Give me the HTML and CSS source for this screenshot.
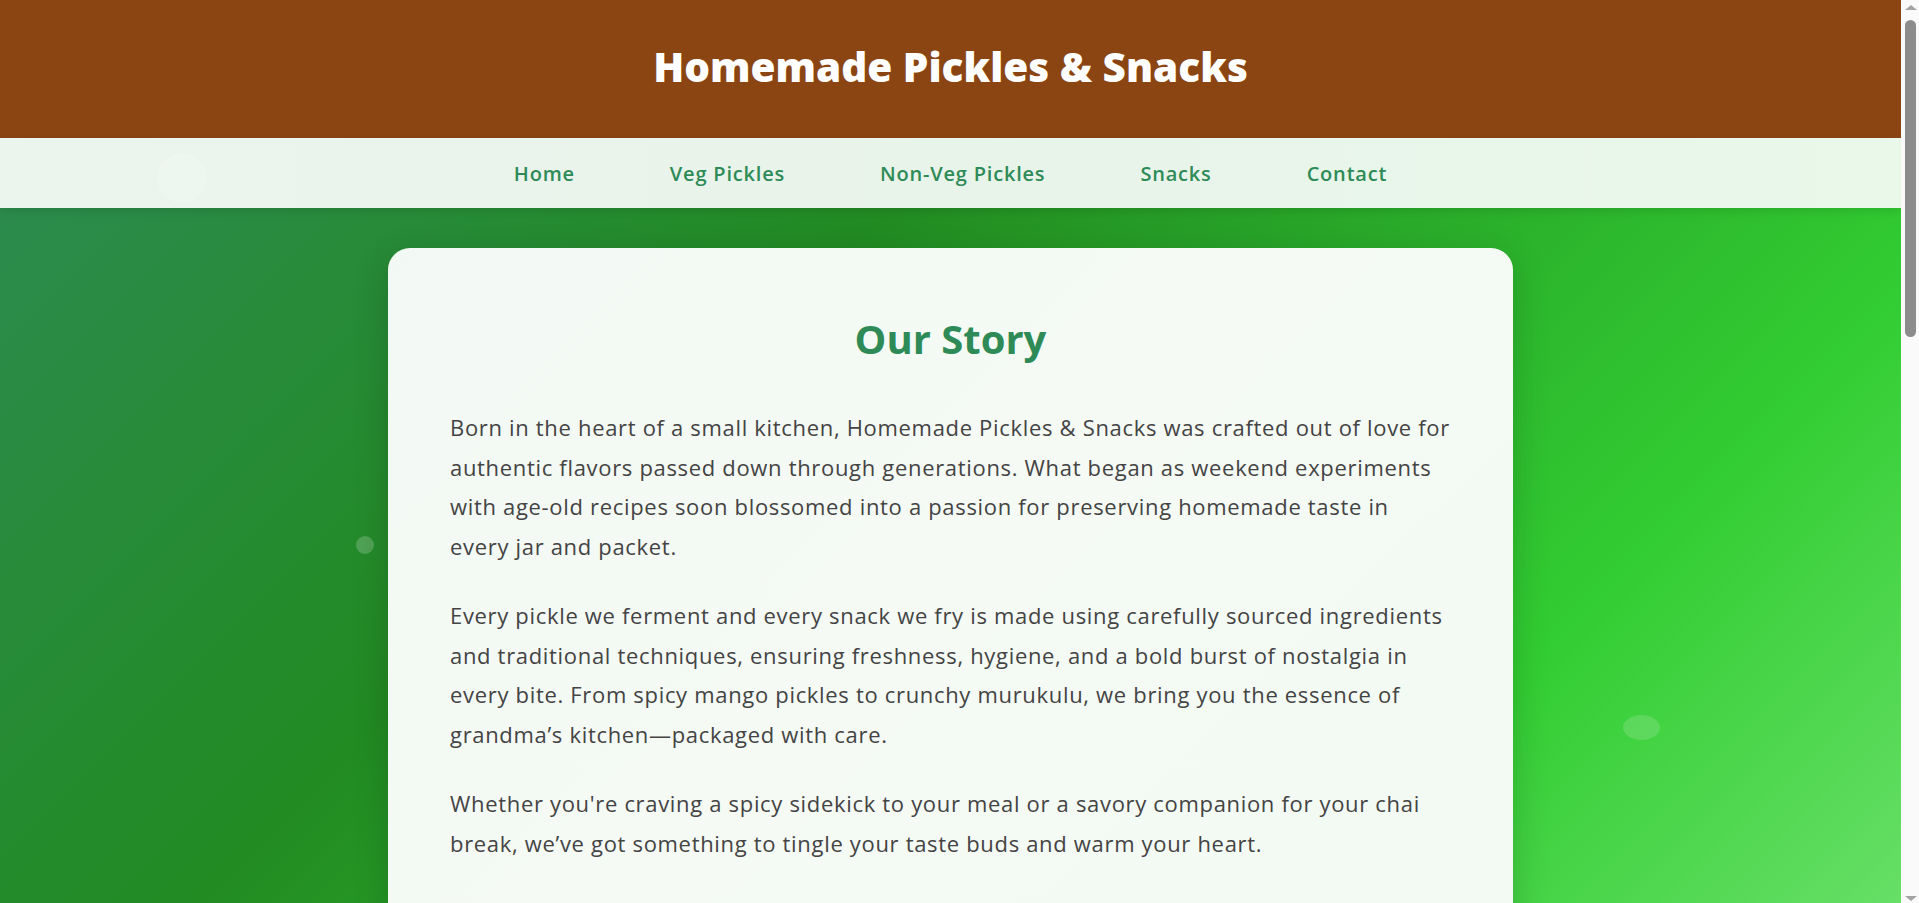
FILE: index.html
```html
<!DOCTYPE html>
<html lang="en">
<head>
<meta charset="utf-8">
<title>Our Story - Homemade Pickles &amp; Snacks</title>
<link rel="stylesheet" href="styles.css">
</head>
<body>
<div class="page">
  <header class="site-header">
    <h1 class="site-title">Homemade Pickles &amp; Snacks</h1>
  </header>
  <nav class="site-nav">
    <span class="bubble bubble-nav"></span>
    <ul class="nav-list">
      <li><a class="nav-link" href="#">Home</a></li>
      <li><a class="nav-link" href="#">Veg Pickles</a></li>
      <li><a class="nav-link" href="#">Non-Veg Pickles</a></li>
      <li><a class="nav-link" href="#">Snacks</a></li>
      <li><a class="nav-link" href="#">Contact</a></li>
    </ul>
  </nav>
  <main class="story-section">
    <span class="bubble bubble-a"></span>
    <span class="bubble bubble-b"></span>
    <article class="story-card">
      <h2 class="story-title">Our Story</h2>
      <p class="story-text">Born in the heart of a small kitchen, Homemade Pickles &amp; Snacks was crafted out of love for authentic flavors passed down through generations. What began as weekend experiments with age-old recipes soon blossomed into a passion for preserving homemade taste in every jar and packet.</p>
      <p class="story-text">Every pickle we ferment and every snack we fry is made using carefully sourced ingredients and traditional techniques, ensuring freshness, hygiene, and a bold burst of nostalgia in every bite. From spicy mango pickles to crunchy murukulu, we bring you the essence of grandma’s kitchen—packaged with care.</p>
      <p class="story-text">Whether you're craving a spicy sidekick to your meal or a savory companion for your chai break, we’ve got something to tingle your taste buds and warm your heart.</p>
    </article>
  </main>
</div>
<div class="scrollbar" aria-hidden="true">
  <span class="scroll-arrow scroll-arrow-up"></span>
  <span class="scroll-thumb"></span>
  <span class="scroll-arrow scroll-arrow-down"></span>
</div>
</body>
</html>
```

FILE: styles.css
```css
* {
  box-sizing: border-box;
}

html {
  scrollbar-width: none;
}

body {
  margin: 0 18px 0 0;
  font-family: "Open Sans", "Noto Sans", sans-serif;
  color: #444;
  background: #fafafa;
}

.page {
  min-height: 2487px;
  background: linear-gradient(135deg, #2e8b57 0%, #228b22 25%, #32cd32 50%, #90ee90 75%, #98fb98 100%);
}

.site-header {
  background: #8b4513;
  height: 138px;
  padding-bottom: 3px;
  display: flex;
  align-items: center;
  justify-content: center;
}

.site-title {
  margin: 0;
  color: #fff;
  font-size: 40.5px;
  font-weight: 800;
  line-height: 1.2;
}

.site-nav {
  position: relative;
  height: 70px;
  display: flex;
  align-items: center;
  justify-content: center;
  background: linear-gradient(90deg, #ebf4ed 0%, #e8f3ea 50%, #e9f8e9 100%);
  box-shadow: 0 2px 10px rgba(0, 0, 0, 0.12);
  z-index: 2;
  overflow: hidden;
}

.nav-list {
  list-style: none;
  margin: 0;
  padding: 0;
  display: flex;
  gap: 63px;
}

.nav-link {
  display: block;
  padding: 8px 16px;
  color: #2e8b57;
  font-size: 20px;
  font-weight: 600;
  letter-spacing: 0.8px;
  text-decoration: none;
}

.story-section {
  position: relative;
  padding: 40px 0 60px;
}

.story-card {
  position: relative;
  width: 1125px;
  margin: 0 auto;
  padding: 67px 62px 60px;
  border-radius: 22px;
  background: linear-gradient(135deg, #f2f8f3 0%, #f5faf5 50%, #f2f9f2 100%);
  box-shadow: 0 10px 36px rgba(0, 0, 0, 0.18);
}

.story-title {
  margin: 0 0 45px;
  text-align: center;
  color: #2e8b57;
  font-size: 40px;
  font-weight: 700;
  line-height: 1.2;
}

.story-text {
  margin: 0 0 30px;
  font-size: 22px;
  line-height: 39.5px;
  letter-spacing: 0.68px;
  color: #444;
}

.bubble {
  position: absolute;
  border-radius: 50%;
  pointer-events: none;
}

.bubble-nav {
  left: 157px;
  top: 15px;
  width: 50px;
  height: 50px;
  background: rgba(255, 255, 255, 0.18);
}

.bubble-a {
  left: 356px;
  top: 328px;
  width: 18px;
  height: 18px;
  background: rgba(255, 255, 255, 0.2);
}

.bubble-b {
  left: 1623px;
  top: 507px;
  width: 37px;
  height: 25px;
  background: rgba(255, 255, 255, 0.15);
}

.scrollbar {
  position: fixed;
  top: 0;
  right: 0;
  width: 18px;
  height: 100vh;
  background: #fafafa;
  z-index: 10;
}

.scroll-thumb {
  position: absolute;
  left: 4px;
  top: 20px;
  width: 11px;
  height: 317px;
  border-radius: 6px;
  background: #8c8c8c;
}

.scroll-arrow {
  position: absolute;
  left: 3.5px;
  width: 0;
  height: 0;
  border-left: 6px solid transparent;
  border-right: 6px solid transparent;
}

.scroll-arrow-up {
  top: 5px;
  border-bottom: 5px solid #a3a3a3;
}

.scroll-arrow-down {
  bottom: 2px;
  border-top: 5px solid #a3a3a3;
}
```
